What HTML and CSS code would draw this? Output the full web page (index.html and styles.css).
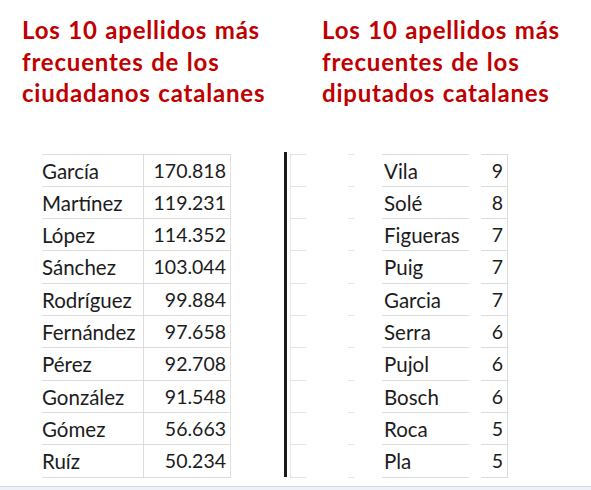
FILE: index.html
```html
<!DOCTYPE html>
<html lang="es">
<head>
  <meta charset="UTF-8" />
  <meta name="viewport" content="width=device-width, initial-scale=1" />
  <link rel="stylesheet" href="styles.css">
</head>
<body>
  <div class="page">
    <div class="titles">
      <h2 class="title">Los 10 apellidos más<br>frecuentes de los<br>ciudadanos catalanes</h2>
      <h2 class="title">Los 10 apellidos más<br>frecuentes de los<br>diputados catalanes</h2>
    </div>

    <div class="tables">
      <div class="left-table" id="citizens"></div>
      <div class="divider"></div>
      <div class="right-table" id="deputies"></div>
    </div>

    <div class="footer"></div>
  </div>

  <script>
    const citizens = [
      ["García", "170.818"], ["Martínez", "119.231"], ["López", "114.352"],
      ["Sánchez", "103.044"], ["Rodríguez", "99.884"], ["Fernández", "97.658"],
      ["Pérez", "92.708"], ["González", "91.548"], ["Gómez", "56.663"],
      ["Ruíz", "50.234"]
    ];

    const deputies = [
      ["Vila", 9], ["Solé", 8], ["Figueras", 7], ["Puig", 7], ["Garcia", 7],
      ["Serra", 6], ["Pujol", 6], ["Bosch", 6], ["Roca", 5], ["Pla", 5]
    ];

    const left = document.getElementById("citizens");
    citizens.forEach(([name, count]) => {
      const row = document.createElement("div");
      row.className = "row";
      row.innerHTML = `<div class="cell name">${name}</div><div class="cell num">${count}</div>`;
      left.appendChild(row);
    });

    const right = document.getElementById("deputies");
    deputies.forEach(([name, count]) => {
      const row = document.createElement("div");
      row.className = "row";
      row.innerHTML =
        `<div class="cell seg first"></div><div></div><div class="cell seg"></div><div></div>` +
        `<div class="cell name">${name}</div><div></div><div class="cell num last">${count}</div>`;
      right.appendChild(row);
    });
  </script>
</body>
</html>
```

FILE: styles.css
```css
html, body {
  margin: 0;
  padding: 0;
  height: 100%;
  background: #fff;
  font-family: Lato, "Open Sans", sans-serif;
  overflow: hidden;
}
.page {
  display: flex;
  flex-direction: column;
  height: 490px;
  box-sizing: border-box;
  padding-top: 14px;
}
.titles {
  display: grid;
  grid-template-columns: 300px 1fr;
  padding-left: 22px;
}
.title {
  margin: 0;
  font-size: 24px;
  line-height: 31.5px;
  letter-spacing: 0.8px;
  word-spacing: 1px;
  font-weight: bold;
  color: #c00000;
}
.tables {
  display: flex;
  align-items: flex-start;
  padding-left: 42px;
  margin-top: 45px;
  font-size: 20.5px;
  color: #1c1c1c;
}
.row {
  display: grid;
  height: 32.3px;
  line-height: 32.3px;
}
.cell {
  box-sizing: border-box;
  border-top: 1px solid #dcdcdc;
  white-space: nowrap;
}
.row:last-child .cell { border-bottom: 1px solid #dcdcdc; }
.num { font-size: 19.5px; }

.left-table .row { grid-template-columns: 102px 87px; }
.left-table .name { border-right: 1px solid #dcdcdc; }
.left-table .num {
  text-align: right;
  padding-right: 4px;
  border-right: 1px solid #e2e2e2;
}

.divider {
  width: 3px;
  height: 325px;
  margin: -2px 0 0 53px;
  background: #1a1a1a;
}

.right-table { margin-left: 3px; }
.right-table .row { grid-template-columns: 16px 42px 6px 28px 87px 12px 27px; }
.right-table .seg { border-top-color: #e4e4e4; }
.right-table .row:last-child .seg { border-bottom-color: #e4e4e4; }
.right-table .first { border-left: 1px solid #e6e6e6; }
.right-table .name { padding-left: 2px; }
.right-table .num { text-align: right; padding-right: 4px; }
.right-table .last { border-right: 1px solid #dcdcdc; }

.footer {
  margin-top: auto;
  height: 3px;
  border-top: 1px solid #d3dde8;
  background: #eef2f6;
}
```
